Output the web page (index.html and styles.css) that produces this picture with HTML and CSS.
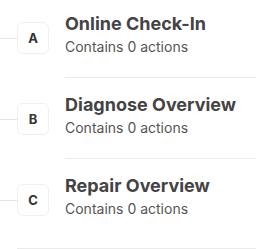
FILE: index.html
```html
<!DOCTYPE html>
<html>
<head>
<title>Stages</title>
<link rel="stylesheet" href="styles.css">
</head>
<body>
  <div id="stages">
    <div class="stage">
      <div class="marker">
        <div class="connector"></div>
        <div class="badge">A</div>
      </div>
      <div class="info">
        <div class="title">Online Check-In</div>
        <div class="sub">Contains 0 actions</div>
      </div>
    </div>
    <div class="stage">
      <div class="marker">
        <div class="connector"></div>
        <div class="badge">B</div>
      </div>
      <div class="info">
        <div class="title">Diagnose Overview</div>
        <div class="sub">Contains 0 actions</div>
      </div>
    </div>
    <div class="stage last">
      <div class="marker">
        <div class="connector"></div>
        <div class="badge">C</div>
      </div>
      <div class="info">
        <div class="title">Repair Overview</div>
        <div class="sub">Contains 0 actions</div>
      </div>
    </div>
  </div>
  <div class="bottom-line"></div>
</body>
</html>
```

FILE: styles.css
```css
body {
margin: 0;
background-color: #ffffff;
font-family: Inter, "Noto Sans", sans-serif;
}

#stages {
display: flex;
flex-direction: column;
gap: 3px;
}

.stage {
display: flex;
}

.marker {
display: flex;
align-items: center;
align-self: flex-start;
margin-top: 22px;
}

.connector {
width: 17px;
height: 1px;
background-color: #e6e6e6;
}

.badge {
width: 30px;
height: 30px;
border: 1px solid #f0f0f0;
border-radius: 6px;
display: flex;
align-items: center;
justify-content: center;
font-size: 13px;
font-weight: 700;
color: #333333;
}

.info {
flex: 1;
margin-left: 16px;
padding-top: 12px;
padding-bottom: 20px;
border-bottom: 1px solid #ebebeb;
}

.last .info {
border-bottom: none;
}

.title {
font-size: 18px;
line-height: 24px;
font-weight: 700;
color: #444444;
}

.sub {
margin-top: 1px;
font-size: 14px;
line-height: 20px;
color: #555555;
}

.bottom-line {
margin-top: 9px;
margin-left: 17px;
height: 1px;
background-color: #ebebeb;
}
```
